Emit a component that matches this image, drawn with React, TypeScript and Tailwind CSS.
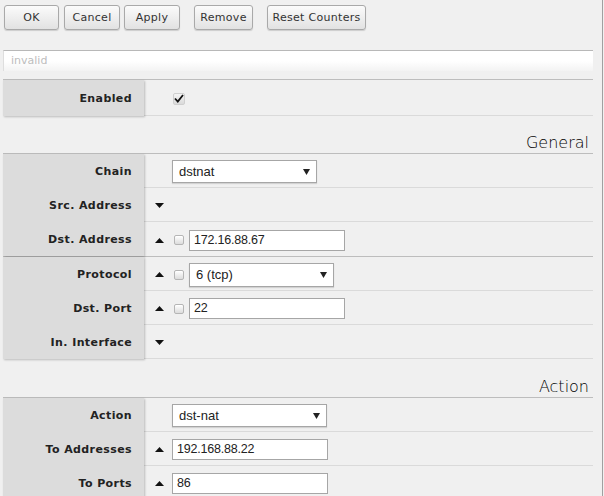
import React from "react";

const FONT_UI = { fontFamily: '"DejaVu Sans", Verdana, sans-serif' };
const FONT_FIELD = { fontFamily: '"Liberation Sans", Arial, sans-serif' };

function Tri({ up }: { up?: boolean }) {
  return (
    <svg width="9" height="5" viewBox="0 0 9 5" className="block">
      <path d={up ? "M0 5 L4.5 0 L9 5 Z" : "M0 0 L9 0 L4.5 5 Z"} fill="#111" />
    </svg>
  );
}

function SmallBox() {
  return (
    <span className="block w-[10px] h-[10px] rounded-[2px] border border-[#b5b5b5] bg-gradient-to-b from-[#ffffff] to-[#dcdcdc] shadow-[inset_0_1px_0_#fff]" />
  );
}

function Btn({ children, w }: { children: React.ReactNode; w: string }) {
  return (
    <button
      className={`${w} h-[25px] pt-[2px] rounded-[3px] border border-[#a9a9a9] bg-gradient-to-b from-[#fbfbfb] to-[#e2e2e2] shadow-[0_1px_1px_rgba(0,0,0,0.15)] text-[11px] tracking-[0.3px] text-[#333] flex items-center justify-center`}
      style={FONT_UI}
    >
      {children}
    </button>
  );
}

function Select({ value, w, h }: { value: string; w: string; h: string }) {
  return (
    <div
      className={`${w} ${h} bg-white border border-[#a6a6a6] shadow-[0_1px_1px_rgba(0,0,0,0.12)] flex items-center justify-between pl-[6px] pr-[6px] text-[13px] text-[#222]`}
      style={FONT_FIELD}
    >
      <span>{value}</span>
      <svg width="7" height="6" viewBox="0 0 7 6">
        <path d="M0 0 L7 0 L3.5 6 Z" fill="#222" />
      </svg>
    </div>
  );
}

function Input({ value, w }: { value: string; w: string }) {
  return (
    <div
      className={`${w} h-[21px] bg-white border border-[#a6a6a6] flex items-center pl-[4px] text-[12.5px] tracking-[-0.2px] text-[#222]`}
      style={FONT_FIELD}
    >
      {value}
    </div>
  );
}

type RowDef = {
  label: string;
  tri?: "up" | "down";
  box?: boolean;
  field?: React.ReactNode;
  h?: string;
  noBorder?: boolean;
};

function Group({ rows }: { rows: RowDef[] }) {
  return (
    <div className="flex border-t border-[#bdbdbd]">
      <div className="w-[141px] bg-[#dcdcdc] shadow-[1px_1px_2px_rgba(0,0,0,0.22)] relative z-10">
        {rows.map((r) => (
          <div
            key={r.label}
            className={`${r.h ?? "h-[34px]"} pt-[2px] flex items-center justify-end pr-[12px] text-[11px] font-bold tracking-[0.4px] text-[#222]`}
            style={FONT_UI}
          >
            {r.label}
          </div>
        ))}
      </div>
      <div className="flex-1">
        {rows.map((r) => (
          <div
            key={r.label}
            className={`${r.h ?? "h-[34px]"} pt-[2px] ${r.noBorder ? "" : "border-b border-[#dadada]"} flex items-center pl-[11px]`}
          >
            <div className="w-[17px] flex items-center">
              {r.tri ? <Tri up={r.tri === "up"} /> : null}
            </div>
            {r.box ? (
              <div className="w-[17px] pl-[2px] flex items-center">
                <SmallBox />
              </div>
            ) : null}
            {r.field}
          </div>
        ))}
      </div>
    </div>
  );
}

function Heading({ text, h }: { text: string; h: string }) {
  return (
    <div className={`${h} flex items-end justify-end pr-[4px] pb-[2px]`}>
      <span className="text-[16px] leading-none font-light text-[#000]" style={FONT_UI}>
        {text}
      </span>
    </div>
  );
}

export default function App() {
  return (
    <div className="w-[604px] h-[496px] overflow-hidden bg-[#f0f0f0]">
      <div className="w-[603px] h-[496px] border-r border-[#a0a0a0]">
        <div className="flex pt-[5px] pl-[4px]">
          <Btn w="w-[55px]">OK</Btn>
          <div className="w-[5px]" />
          <Btn w="w-[56px]">Cancel</Btn>
          <div className="w-[4px]" />
          <Btn w="w-[56px]">Apply</Btn>
          <div className="w-[14px]" />
          <Btn w="w-[59px]">Remove</Btn>
          <div className="w-[14px]" />
          <Btn w="w-[99px]">Reset Counters</Btn>
        </div>

        <div className="pl-[3px] w-[593px]">
          <div
            className="mt-[20px] h-[21px] bg-gradient-to-b from-[#ffffff] via-[#ffffff] to-[#f3f3f3] border-t border-[#b8b8b8] border-l border-l-[#dedede] flex items-center pl-[7px] text-[11px] text-[#bdbdbd]"
            style={FONT_UI}
          >
            invalid
          </div>

          <div className="mt-[8px]">
            <Group
              rows={[
                {
                  label: "Enabled",
                  h: "h-[36px]",
                  field: (
                    <div className="pl-[1px] flex items-center">
                      <span className="w-[12px] h-[12px] rounded-[2px] bg-gradient-to-b from-[#f4f4f4] to-[#dadada] border border-[#cfcfcf] flex items-center justify-center">
                        <svg width="10" height="9" viewBox="0 0 10 9">
                          <path d="M1 4.5 L3.8 7.5 L9 1" fill="none" stroke="#111" strokeWidth="1.8" />
                        </svg>
                      </span>
                    </div>
                  ),
                },
              ]}
            />
          </div>

          <Heading text="General" h="h-[37px]" />

          <Group
            rows={[
              { label: "Chain", field: <Select value="dstnat" w="w-[145px]" h="h-[23px]" /> },
              { label: "Src. Address", tri: "down" },
              {
                label: "Dst. Address",
                tri: "up",
                box: true,
                field: <Input value="172.16.88.67" w="w-[156px]" />,
                noBorder: true,
              },
            ]}
          />
          <Group
            rows={[
              {
                label: "Protocol",
                tri: "up",
                box: true,
                field: <Select value="6 (tcp)" w="w-[145px]" h="h-[24px]" />,
              },
              { label: "Dst. Port", tri: "up", box: true, field: <Input value="22" w="w-[156px]" /> },
              { label: "In. Interface", tri: "down" },
            ]}
          />

          <Heading text="Action" h="h-[38px]" />

          <Group
            rows={[
              { label: "Action", field: <Select value="dst-nat" w="w-[155px]" h="h-[23px]" /> },
              { label: "To Addresses", tri: "up", field: <Input value="192.168.88.22" w="w-[156px]" /> },
              { label: "To Ports", tri: "up", field: <Input value="86" w="w-[156px]" /> },
            ]}
          />
        </div>
      </div>
    </div>
  );
}
